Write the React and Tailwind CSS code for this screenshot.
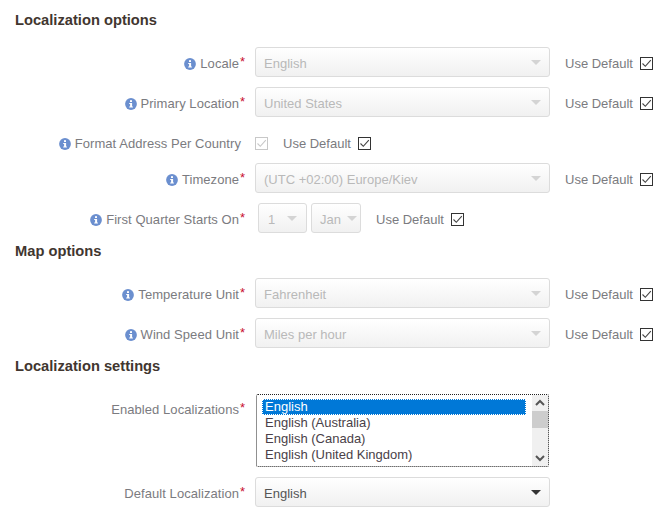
import React from 'react';

function InfoIcon() {
  return (
    <svg width="12" height="12" viewBox="0 0 12 12" className="mr-1 shrink-0">
      <circle cx="6" cy="6" r="5.9" fill="#6b8fcf" />
      <rect x="5" y="2.2" width="2" height="1.8" fill="#fff" />
      <path d="M4.2 5h2.9v3.6h0.8v1H4.2v-1h0.9V6h-0.9z" fill="#fff" />
    </svg>
  );
}

function Caret({ dark }) {
  return (
    <span className={`w-0 h-0 border-x-[5px] border-x-transparent border-t-[5px] ${dark ? 'border-t-[#333]' : 'border-t-[#d4d4d4]'}`} />
  );
}

function Check({ disabled }) {
  return (
    <span className={`w-[13px] h-[13px] flex items-center justify-center shrink-0 border ${disabled ? 'border-[#c8c8c8]' : 'border-[#333]'}`}>
      <svg width="11" height="11" viewBox="0 0 11 11">
        <path d="M1.5 5.5l2.8 2.8L9.8 2.2" fill="none" stroke={disabled ? '#c8c8c8' : '#444'} strokeWidth="1.1" />
      </svg>
    </span>
  );
}

function UseDefault({ className }) {
  return (
    <div className={`flex items-center pt-[3px] ${className}`}>
      <span>Use Default</span>
      <span className="ml-[7px]"><Check /></span>
    </div>
  );
}

function Select({ value, className, dark, pad = 'pl-2 pr-2' }) {
  return (
    <div className={`h-[30px] flex items-center justify-between rounded-[3px] border border-[#dcdcdc] bg-gradient-to-b from-white to-[#f1f1f1] ${pad} ${dark ? 'text-[#555]' : 'text-[#b9b9b9]'} ${className}`}>
      <span className="pt-[3px]">{value}</span>
      <Caret dark={dark} />
    </div>
  );
}

function Label({ text, info, required = true }) {
  return (
    <div className="w-[247px] shrink-0 flex items-center justify-end whitespace-nowrap tracking-[0.06px] pt-[3px]">
      {info && <InfoIcon />}
      <span>{text}</span>
      {required
        ? <span className="w-2 pl-px mt-px text-[#c8102e] self-start leading-[13px]">*</span>
        : <span className="w-[6px]" />}
    </div>
  );
}

function SelectRow({ label, value, info = true, mt }) {
  return (
    <div className={`flex items-center h-[30px] ${mt}`}>
      <Label text={label} info={info} />
      <Select value={value} className="ml-2 w-[295px]" />
      <UseDefault className="ml-[15px]" />
    </div>
  );
}

function Title({ children, className }) {
  return <h2 className={`pl-[15px] text-[14.7px] leading-[18px] font-bold text-[#41362f] ${className}`}>{children}</h2>;
}

const locales = ['English', 'English (Australia)', 'English (Canada)', 'English (United Kingdom)', 'English (United States)'];

export default function App() {
  return (
    <div className="w-[667px] h-[521px] overflow-hidden bg-white text-[13px] text-[#7b7b80] font-['Liberation_Sans',Arial,sans-serif]">
      <Title className="pt-[11px]">Localization options</Title>
      <SelectRow mt="mt-[18px]" label="Locale" value="English" />
      <SelectRow mt="mt-[10px]" label="Primary Location" value="United States" />

      <div className="flex items-center h-[20px] mt-[15px]">
        <Label text="Format Address Per Country" info required={false} />
        <span className="ml-2 pt-[2px]"><Check disabled /></span>
        <UseDefault className="ml-[15px]" />
      </div>

      <SelectRow mt="mt-[11px]" label="Timezone" value="(UTC +02:00) Europe/Kiev" />

      <div className="flex items-center h-[30px] mt-[10px]">
        <Label text="First Quarter Starts On" info />
        <Select value="1" className="ml-[11px] w-[49px]" pad="pl-[9px] pr-[9px]" />
        <Select value="Jan" className="ml-1 w-[50px]" pad="pl-2 pr-[3px]" />
        <UseDefault className="ml-[15px]" />
      </div>

      <Title className="mt-[9px]">Map options</Title>
      <SelectRow mt="mt-[18px]" label="Temperature Unit" value="Fahrenheit" />
      <SelectRow mt="mt-[10px]" label="Wind Speed Unit" value="Miles per hour" />

      <Title className="mt-[9px]">Localization settings</Title>

      <div className="flex mt-[18px]">
        <div className="pt-[4px]"><Label text="Enabled Localizations" /></div>
        <div className="ml-[9px] mt-px w-[293px] h-[73px] relative overflow-hidden rounded-[2px] border border-dotted border-[#222] bg-white text-[#4a3f48]">
          <div className="pt-[4px] pl-[5px] pr-[22px]">
            {locales.map((l, i) => (
              <div key={l} className={`h-4 leading-4 pl-[3px] whitespace-nowrap ${i === 0 ? 'bg-[#0078d7] text-white outline-1 outline-dotted -outline-offset-1 outline-white' : ''}`}>{l}</div>
            ))}
          </div>
          <div className="absolute right-0 top-0 bottom-0 w-4 bg-[#f0f0f0] flex flex-col items-center justify-between">
            <svg width="16" height="16" viewBox="0 0 16 16"><path d="M4 10l4-4 4 4" fill="none" stroke="#555" strokeWidth="2" /></svg>
            <div className="absolute top-[16px] w-4 h-[17px] bg-[#cdcdcd]" />
            <svg width="16" height="16" viewBox="0 0 16 16"><path d="M4 6l4 4 4-4" fill="none" stroke="#555" strokeWidth="2" /></svg>
          </div>
        </div>
      </div>

      <div className="flex items-center h-[30px] mt-[10px]">
        <Label text="Default Localization" />
        <Select value="English" className="ml-2 w-[295px]" dark />
      </div>
    </div>
  );
}
